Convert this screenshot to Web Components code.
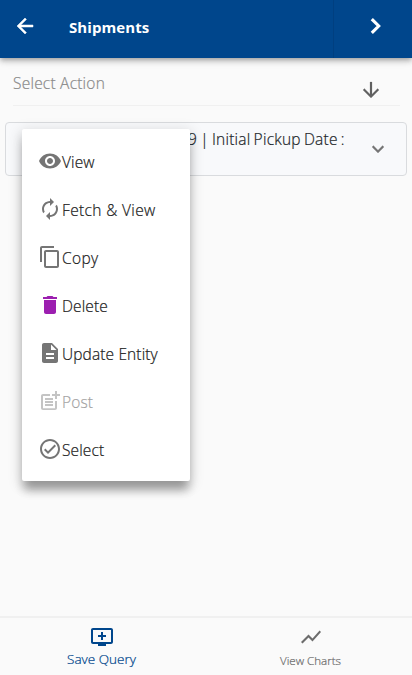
<!DOCTYPE html>
<html lang="en"><head><meta charset="utf-8"><title>Shipments</title>
<style>
html,body{margin:0;height:100%;background:#fafafa;overflow:hidden;font-family:"Open Sans","Noto Sans",sans-serif;font-weight:300;-webkit-text-stroke:.22px currentColor}
</style></head><body>
<shipments-page></shipments-page>
<script>
const ICONS={
back:'<path d="M20 11H7.83l5.59-5.59L12 4l-8 8 8 8 1.41-1.41L7.83 13H20v-2z" stroke="currentColor" stroke-width=".5"/>',
next:'<path d="M7.800 5.100 14.700 12l-6.900 6.900" fill="none" stroke="currentColor" stroke-width="3.1"/>',
down:'<path d="M20 12l-1.41-1.41L13 16.17V4h-2v12.17l-5.58-5.59L4 12l8 8 8-8z" stroke="currentColor" stroke-width=".2"/>',
expand:'<path d="M16.59 8.59L12 13.17 7.41 8.59 6 10l6 6 6-6z" stroke="currentColor" stroke-width=".2"/>',
view:'<path d="M12 4.5C7 4.5 2.73 7.61 1 12c1.73 4.39 6 7.5 11 7.5s9.270-3.110 11-7.5c-1.730-4.390-6-7.500-11-7.500zM12 17c-2.760 0-5-2.240-5-5s2.240-5 5-5 5 2.240 5 5-2.240 5-5 5zm0-8c-1.660 0-3 1.340-3 3s1.340 3 3 3 3-1.340 3-3-1.340-3-3-3z"/>',
fetch:'<path d="M12 6v3l4-4-4-4v3c-4.420 0-8 3.580-8 8 0 1.570.460 3.030 1.240 4.260L6.700 14.800c-.450-.830-.700-1.790-.700-2.800 0-3.310 2.690-6 6-6zm6.760 1.740L17.300 9.200c.440.840.700 1.790.700 2.800 0 3.310-2.690 6-6 6v-3l-4 4 4 4v-3c4.420 0 8-3.580 8-8 0-1.570-.460-3.030-1.240-4.260z"/>',
copy:'<path d="M16 1H4c-1.100 0-2 .900-2 2v14h2V3h12V1zm3 4H8c-1.100 0-2 .900-2 2v14c0 1.100.900 2 2 2h11c1.100 0 2-.900 2-2V7c0-1.100-.900-2-2-2zm0 16H8V7h11v14z"/>',
delete:'<path d="M6 19c0 1.100.900 2 2 2h8c1.100 0 2-.900 2-2V7H6v12zM19 4h-3.500l-1-1h-5l-1 1H5v2h14V4z"/>',
update:'<path d="M14 2H6c-1.100 0-1.990.900-1.990 2L4 20c0 1.100.890 2 1.990 2H18c1.100 0 2-.900 2-2V8l-6-6zm2 16H8v-2h8v2zm0-4H8v-2h8v2zm-3-5V3.500L18.500 9H13z"/>',
post:'<path d="M17 19.220H5V7h7V5H5c-1.100 0-2 .900-2 2v12c0 1.100.900 2 2 2h12c1.100 0 2-.900 2-2v-7h-2v7.220z"/><path d="M19 2h-2v3h-3c.010.010 0 2 0 2h3v2.990c.010.010 2 0 2 0V7h3V5h-3V2zM7 9h8v2H7zM7 12v2h8v-2h-3zM7 15h8v2H7z"/>',
select:'<path d="M12 2C6.480 2 2 6.480 2 12s4.480 10 10 10 10-4.480 10-10S17.520 2 12 2zm0 18c-4.410 0-8-3.590-8-8s3.590-8 8-8 8 3.590 8 8-3.590 8-8 8zm4.590-12.420L10 14.170l-2.590-2.580L6 13l4 4 8-8z"/>',
queue:'<path d="M21 3H3c-1.110 0-2 .890-2 2v12c0 1.100.890 2 2 2h5v2h8v-2h5c1.100 0 1.990-.900 1.990-2L23 5c0-1.110-.900-2-2-2zm0 14H3V5h18v12zm-5-7v2h-3v3h-2v-3H8v-2h3V7h2v3h3z"/>',
chart:'<path d="M3.500 18.490l6-6.010 4 4L22 6.920l-1.410-1.410-7.090 7.970-4-4L2 16.990z"/>'
};
const define=(name,html)=>customElements.define(name,class extends HTMLElement{
 constructor(){super();this.attachShadow({mode:'open'}).innerHTML=html;}
});
customElements.define('ui-icon',class extends HTMLElement{
 connectedCallback(){
  if(this.shadowRoot)return;
  this.attachShadow({mode:'open'}).innerHTML='<style>:host{display:block;width:24px;height:24px;flex:none}svg{display:block;width:100%;height:100%}</style><svg viewBox="0 0 24 24" fill="currentColor">'+ICONS[this.getAttribute('name')]+'</svg>';
 }
});
define('app-header',`<style>
:host{display:flex;height:58px;background:#00468c;color:#fff;box-shadow:0 2px 4px -1px rgba(0,0,0,.2),0 4px 5px rgba(0,0,0,.14),0 1px 10px rgba(0,0,0,.12);position:relative}
.left{flex:1;display:flex;align-items:flex-start;padding:14px 0 0 13px}
h1{margin:2px 0 0 32px;font-size:15px;line-height:22px;font-weight:700;letter-spacing:.08px;-webkit-text-stroke:0}
.right{width:79px;border-left:1px solid #003f80;padding:14px 0 0 30px;box-sizing:border-box}
</style><div class="left"><ui-icon name="back"></ui-icon><h1><slot></slot></h1></div><div class="right"><ui-icon name="next"></ui-icon></div>`);
define('action-select',`<style>
:host{display:flex;justify-content:space-between;margin:0 12px 0 13px;height:48px;border-bottom:1px solid #f0f0f0;box-sizing:border-box;color:#8a8a8a;font-size:15.5px;line-height:22px}
span{padding-top:14px;letter-spacing:.22px}ui-icon{color:#616161;margin:20px 17px 0 0}
</style><span><slot></slot></span><ui-icon name="down"></ui-icon>`);
define('shipment-card',`<style>
:host{display:flex;justify-content:space-between;box-sizing:border-box;height:54px;margin:16px 5px 0;border:1px solid #d9dbde;border-radius:4px;background:#f8f9fb;color:#212529;font-size:15.5px;line-height:22px}
span{padding:5px 0 0 182px;white-space:nowrap;letter-spacing:.22px;word-spacing:-1.1px}ui-icon{color:#757575;margin:14px 16px 0 0}
</style><span><slot></slot></span><ui-icon name="expand"></ui-icon>`);
define('action-menu',`<style>
:host{display:block;position:absolute;left:22px;top:129px;width:168px;box-sizing:border-box;padding:8px 0;background:#fff;border-radius:2px;box-shadow:0 12px 9px -3px rgba(0,0,0,.26),0 8px 10px 1px rgba(0,0,0,.1),0 3px 14px 2px rgba(0,0,0,.12)}
</style><slot></slot>`);
customElements.define('menu-entry',class extends HTMLElement{
 connectedCallback(){
  if(this.shadowRoot)return;
  this.attachShadow({mode:'open'}).innerHTML=`<style>
:host{display:flex;height:48px;box-sizing:border-box;padding:12px 16px;color:#212121;font-size:15.5px;line-height:24px;white-space:nowrap;letter-spacing:.12px}
:host([disabled]){opacity:.42}
ui-icon{color:var(--icon,#757575)}span{padding-top:1px}
</style><ui-icon name="${this.getAttribute('icon')}"></ui-icon><span><slot></slot></span>`;
 }
});
define('bottom-nav',`<style>:host{display:flex;height:59px;box-sizing:border-box;border-top:2px solid #f0f0f0;margin-top:auto}</style><slot></slot>`);
customElements.define('nav-tab',class extends HTMLElement{
 connectedCallback(){
  if(this.shadowRoot)return;
  this.attachShadow({mode:'open'}).innerHTML=`<style>
:host{display:flex;flex-direction:column;align-items:center;padding-top:7px;box-sizing:border-box;color:#6c6c6c;font-size:11.600px;line-height:20px;width:215px;flex:none}
:host([active]){color:#00468c;font-size:13.500px;width:203px}
span{margin-top:2px}:host([active]) span{margin-top:0}
</style><ui-icon name="${this.getAttribute('icon')}"></ui-icon><span><slot></slot></span>`;
 }
});
define('shipments-page',`<style>:host{display:flex;flex-direction:column;position:relative;height:675px;width:412px;background:#fafafa}</style>
<app-header>Shipments</app-header>
<action-select>Select Action</action-select>
<shipment-card>9 | Initial Pickup Date :</shipment-card>
<action-menu>
<menu-entry icon="view">View</menu-entry>
<menu-entry icon="fetch" style="letter-spacing:.36px">Fetch &amp; View</menu-entry>
<menu-entry icon="copy" style="letter-spacing:.36px">Copy</menu-entry>
<menu-entry icon="delete" style="--icon:#9c1fb0">Delete</menu-entry>
<menu-entry icon="update">Update Entity</menu-entry>
<menu-entry icon="post" disabled>Post</menu-entry>
<menu-entry icon="select">Select</menu-entry>
</action-menu>
<bottom-nav><nav-tab icon="queue" active>Save Query</nav-tab><nav-tab icon="chart">View Charts</nav-tab></bottom-nav>`);
</script></body></html>
